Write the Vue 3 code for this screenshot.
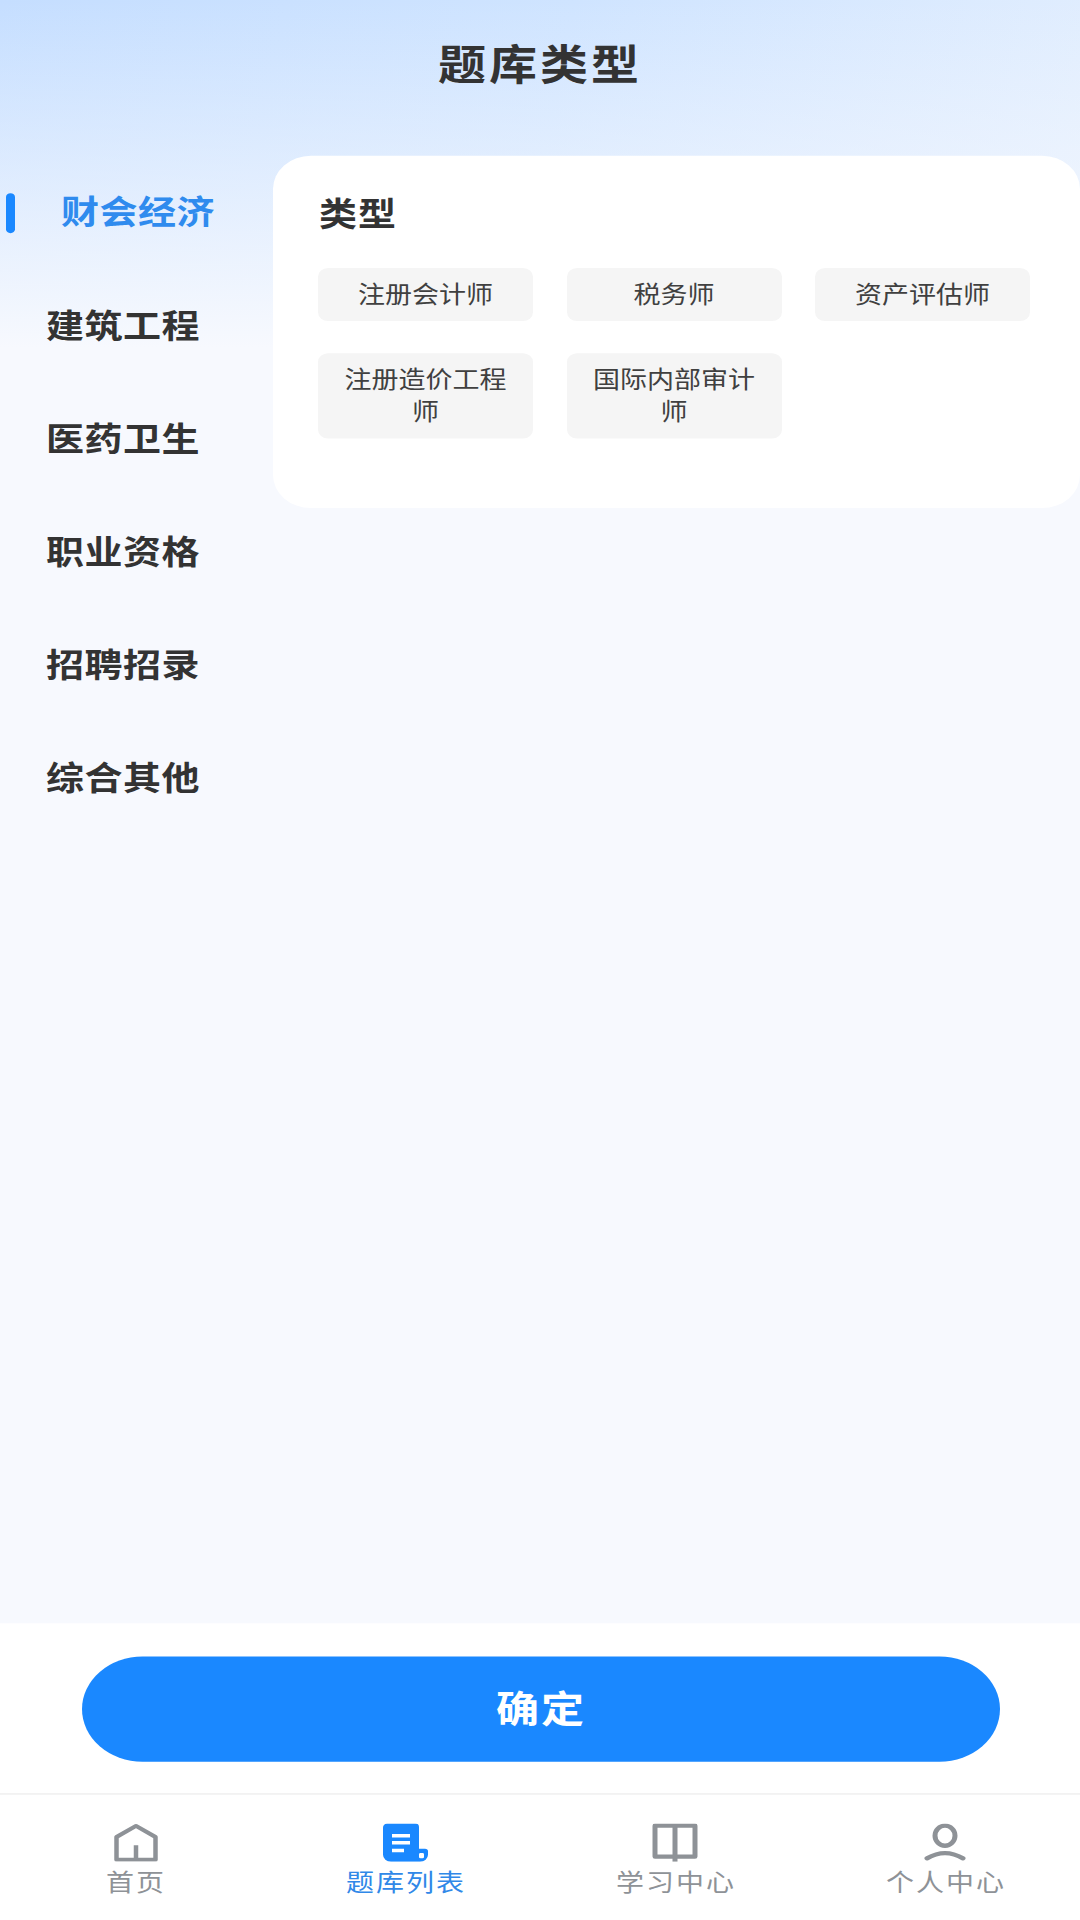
<script setup>
const categories = ['财会经济', '建筑工程', '医药卫生', '职业资格', '招聘招录', '综合其他']
const types = ['注册会计师', '税务师', '资产评估师', '注册造价工程师', '国际内部审计师']
const tabs = [
  { label: '首页', icon: 'home' },
  { label: '题库列表', icon: 'list', active: true },
  { label: '学习中心', icon: 'book' },
  { label: '个人中心', icon: 'user' }
]
</script>

<template>
  <div class="frame">
    <div class="page">
      <main class="main">
        <h1 class="title">题库类型</h1>
        <div class="content">
          <nav class="side">
            <div v-for="(c, i) in categories" :key="c" class="side-item" :class="{ on: i === 0 }">
              <span v-if="i === 0" class="marker"></span>{{ c }}
            </div>
          </nav>
          <section class="card">
            <h2 class="card-title">类型</h2>
            <div class="chips">
              <div v-for="t in types" :key="t" class="chip">{{ t }}</div>
            </div>
          </section>
        </div>
      </main>
      <div class="action">
        <button class="confirm">确定</button>
      </div>
      <footer class="tabbar">
        <div v-for="t in tabs" :key="t.label" class="tab" :class="{ on: t.active }">
          <svg class="icon" viewBox="0 0 46 44">
            <g v-if="t.icon === 'home'" fill="none" stroke="#8e9297" stroke-width="4.5" stroke-linejoin="round">
              <path d="M4.5 41.5V15.5L24 2.8L43.5 15.5V41.5Z" />
              <path d="M24 41.5V25" />
            </g>
            <g v-else-if="t.icon === 'list'">
              <path fill="#1a88ff" d="M5 0H33a4 4 0 0 1 4 4V29H43a3 3 0 0 1 3 3V36a8 8 0 0 1-8 8H9a8 8 0 0 1-8-8V5a5 5 0 0 1 4-5Z" />
              <path stroke="#fff" stroke-width="4" d="M10 14H28M10 22H28M10 31H22" fill="none" />
              <rect x="37" y="34" width="5" height="6" rx="1.5" fill="#fff" />
            </g>
            <g v-else-if="t.icon === 'book'" fill="none" stroke="#8e9297" stroke-width="5" stroke-linejoin="round">
              <path d="M3 2.5H43V38H3Z" />
              <path d="M23 2.5V44" />
            </g>
            <g v-else fill="none" stroke="#8e9297" stroke-linecap="round">
              <ellipse cx="23" cy="14" rx="10" ry="11.5" stroke-width="5" />
              <path d="M5 40Q23 28 41 40" stroke-width="5" />
            </g>
          </svg>
          <span class="tab-label">{{ t.label }}</span>
        </div>
      </footer>
    </div>
  </div>
</template>

<style scoped>
.frame {
  width: 1080px;
  height: 1920px;
  overflow: hidden;
}
.page {
  width: 1080px;
  height: 2207px;
  display: flex;
  flex-direction: column;
  transform: scaleY(0.87);
  transform-origin: 0 0;
  font-family: "Noto Sans CJK SC", "Noto Sans", sans-serif;
  color: #333;
}
.main {
  flex: 1;
  min-height: 0;
  background:
    linear-gradient(180deg, rgba(247, 249, 254, 0) 0, #f7f9fe 400px),
    linear-gradient(100deg, #c5deff 0, #cfe4ff 50%, #e2eefe 100%);
  background-size: 100% 100%, 100% 400px;
  background-repeat: no-repeat;
  background-color: #f7f9fd;
}
.title {
  margin: 0;
  height: 179px;
  padding-top: 41px;
  box-sizing: border-box;
  font-size: 48px;
  line-height: 60px;
  letter-spacing: 3px;
  font-weight: 700;
  text-align: center;
}
.content {
  display: flex;
  align-items: flex-start;
}
.side {
  width: 273px;
  flex: none;
  padding-top: 1px;
}
.side-item {
  position: relative;
  height: 130px;
  line-height: 123px;
  padding-left: 46px;
  font-size: 38px;
  letter-spacing: 0.5px;
  font-weight: 700;
}
.side-item.on {
  padding-left: 61px;
  color: #2f8bee;
}
.marker {
  position: absolute;
  left: 6px;
  top: 42px;
  width: 9px;
  height: 46px;
  border-radius: 5px;
  background: #1a88ff;
}
.card {
  flex: 1;
  height: 405px;
  box-sizing: border-box;
  padding: 40px 50px 0 45px;
  background: #fff;
  border-radius: 38px;
}
.card-title {
  margin: 0 0 39px;
  font-size: 38px;
  line-height: 50px;
  letter-spacing: 1px;
  font-weight: 700;
  padding-left: 1px;
}
.chips {
  display: grid;
  grid-template-columns: repeat(3, 215px);
  column-gap: 33.5px;
  row-gap: 37px;
}
.chip {
  padding: 10px 18px 14px;
  font-size: 27px;
  line-height: 37px;
  text-align: center;
  color: #404040;
  background: #f5f5f5;
  border-radius: 10px;
}
.action {
  background: #fff;
  padding: 38px 80px 36px 82px;
}
.confirm {
  display: block;
  width: 100%;
  height: 121px;
  border: 0;
  padding: 0 0 5px;
  border-radius: 61px;
  background: #1a88ff;
  color: #fff;
  font: 700 43px/116px "Noto Sans CJK SC", sans-serif;
  letter-spacing: 2px;
}
.tabbar {
  display: grid;
  grid-template-columns: repeat(4, 1fr);
  height: 146px;
  box-sizing: border-box;
  background: #fff;
  border-top: 2px solid #f2f2f2;
  padding-top: 33px;
}
.tab {
  display: flex;
  flex-direction: column;
  align-items: center;
  color: #8e9297;
}
.tab.on {
  color: #3088e8;
}
.icon {
  width: 46px;
  height: 44px;
}
.tab-label {
  margin-top: 2px;
  margin-left: 2px;
  font-size: 28px;
  letter-spacing: 2px;
  line-height: 40px;
}
</style>
